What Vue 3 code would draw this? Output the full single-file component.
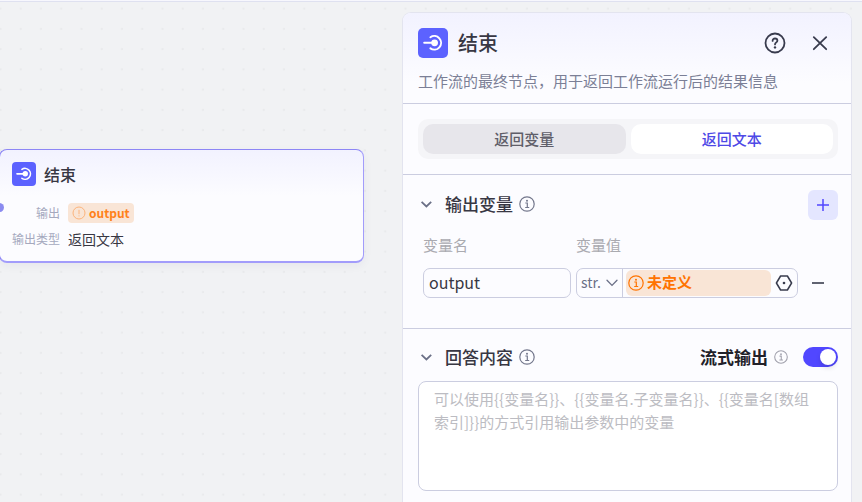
<script setup>
import { ref, computed } from 'vue'

const tabs = ['返回变量', '返回文本']
const active = ref(1)
const name = ref('output')
const type = ref('str.')
const streaming = ref(true)
const answer = ref('')
const outputType = computed(() => tabs[active.value])
const hint = '可以使用{{变量名}}、{{变量名.子变量名}}、{{变量名[数组索引]}}的方式引用输出参数中的变量'
</script>

<template>
  <main class="page">
    <svg class="dots" aria-hidden="true">
      <defs>
        <pattern id="dot-grid" x="-10" y="-4" width="20.25" height="20.25" patternUnits="userSpaceOnUse">
          <circle cx="10.5" cy="10.5" r="1.2" fill="#e9eaec" />
        </pattern>
      </defs>
      <rect width="100%" height="100%" fill="url(#dot-grid)" />
    </svg>

    <div class="stage">
      <article class="node">
        <span class="port"></span>
        <header class="node-head">
          <span class="logo small">
            <svg viewBox="0 0 30 30" aria-hidden="true">
              <path d="M12.4 9.2A6.8 6.8 0 1 1 12.4 20.4" fill="none" stroke="#fff" stroke-width="2" stroke-linecap="round" />
              <path d="M6.2 14.8H15" stroke="#fff" stroke-width="2" stroke-linecap="round" />
              <circle cx="16.6" cy="14.8" r="3.4" fill="#fff" />
            </svg>
          </span>
          <h2>结束</h2>
        </header>
        <dl>
          <dt>输出</dt>
          <dd>
            <span class="chip">
              <svg viewBox="0 0 14 14" aria-hidden="true">
                <circle cx="7" cy="7" r="6" fill="none" stroke="#fcb47c" />
                <path d="M7 3.8V8.2M7 9.4V10.4" stroke="#fcb47c" />
              </svg>
              output
            </span>
          </dd>
          <dt>输出类型</dt>
          <dd>{{ outputType }}</dd>
        </dl>
      </article>
    </div>

    <section class="panel">
      <header class="panel-head">
        <div class="title-row">
          <span class="logo">
            <svg viewBox="0 0 30 30" aria-hidden="true">
              <path d="M12.4 9.2A6.8 6.8 0 1 1 12.4 20.4" fill="none" stroke="#fff" stroke-width="2" stroke-linecap="round" />
              <path d="M6.2 14.8H15" stroke="#fff" stroke-width="2" stroke-linecap="round" />
              <circle cx="16.6" cy="14.8" r="3.4" fill="#fff" />
            </svg>
          </span>
          <h1>结束</h1>
          <button class="icon-btn" type="button" aria-label="帮助">
            <svg width="22" height="22" viewBox="0 0 22 22" fill="none" stroke="#383b4d" stroke-width="1.8" stroke-linecap="round">
              <circle cx="11" cy="11" r="9.5" />
              <path d="M8.6 8.9C8.6 7.4 9.6 6.5 11 6.5S13.4 7.4 13.4 8.7C13.4 10.3 11 10.5 11 12.4" />
              <circle cx="11" cy="15.4" r="1.2" fill="#383b4d" stroke="none" />
            </svg>
          </button>
          <button class="icon-btn" type="button" aria-label="关闭">
            <svg width="22" height="22" viewBox="0 0 22 22" fill="none" stroke="#383b4d" stroke-width="1.8" stroke-linecap="round">
              <path d="M4.8 5.1L17.2 17.2M17.2 5.1L4.8 17.2" />
            </svg>
          </button>
        </div>
        <p>工作流的最终节点，用于返回工作流运行后的结果信息</p>
      </header>

      <div class="tabs-wrap">
        <div class="tabs">
          <button
            v-for="(tab, i) in tabs"
            :key="tab"
            type="button"
            :class="{ on: i === active }"
            :aria-pressed="i === active"
            @click="active = i"
          >{{ tab }}</button>
        </div>
      </div>

      <div class="block variables">
        <div class="block-head">
          <svg class="chevron" viewBox="0 0 16 16"><path d="M3.6 5.8L8.4 10.4L13.2 5.8" /></svg>
          <h3>输出变量</h3>
          <svg class="info" viewBox="0 0 16 16"><circle cx="8" cy="8" r="7.2" /><path d="M6.3 7H8.3V11.4M6.2 11.5H10.2" /><circle class="pt" cx="8" cy="4.8" r="1" /></svg>
          <button class="add" type="button" aria-label="添加变量">
            <svg width="14" height="14" viewBox="0 0 14 14"><path d="M7 1V13M1 7H13" stroke="#5147ff" stroke-width="1.5" /></svg>
          </button>
        </div>
        <div class="fields">
          <label class="field-label" for="var-name">变量名</label>
          <label class="field-label value-label" for="var-type">变量值</label>
          <input id="var-name" v-model="name" type="text" />
          <div class="value-box">
            <span class="select-wrap">
              <select id="var-type" v-model="type">
                <option>str.</option>
                <option>int.</option>
              </select>
              <svg width="12" height="8" viewBox="0 0 12 8"><path d="M1 1.2L6 6.4L11 1.2" fill="none" stroke="#6b7087" stroke-width="1.3" stroke-linecap="round" /></svg>
            </span>
            <span class="undefined">
              <svg class="info" viewBox="0 0 16 16"><circle cx="8" cy="8" r="7.2" /><path d="M6.3 7H8.3V11.4M6.2 11.5H10.2" /><circle class="pt" cx="8" cy="4.8" r="1" /></svg>
              <span>未定义</span>
            </span>
            <button class="ref-btn" type="button" aria-label="选择引用">
              <svg width="18" height="18" viewBox="0 0 18 18"><path d="M5.6 2H12.4L16.6 9L12.4 16H5.6L1.4 9Z" fill="none" stroke="#383b4d" stroke-width="1.5" stroke-linejoin="round" /><circle cx="9" cy="9" r="1.3" fill="#383b4d" /></svg>
            </button>
          </div>
          <button class="remove" type="button" aria-label="删除变量">
            <svg width="14" height="14" viewBox="0 0 14 14"><path d="M1 7H13" stroke="#383b4d" stroke-width="1.6" /></svg>
          </button>
        </div>
      </div>

      <div class="block answer">
        <div class="block-head">
          <svg class="chevron" viewBox="0 0 16 16"><path d="M3.6 5.8L8.4 10.4L13.2 5.8" /></svg>
          <h3><label for="answer">回答内容</label></h3>
          <svg class="info" viewBox="0 0 16 16"><circle cx="8" cy="8" r="7.2" /><path d="M6.3 7H8.3V11.4M6.2 11.5H10.2" /><circle class="pt" cx="8" cy="4.8" r="1" /></svg>
          <label class="stream" for="stream">流式输出</label>
          <svg class="info light" viewBox="0 0 16 16"><circle cx="8" cy="8" r="7.2" /><path d="M6.3 7H8.3V11.4M6.2 11.5H10.2" /><circle class="pt" cx="8" cy="4.8" r="1" /></svg>
          <input id="stream" v-model="streaming" class="switch" type="checkbox" role="switch" />
        </div>
        <textarea id="answer" v-model="answer" :placeholder="hint"></textarea>
      </div>
    </section>
  </main>
</template>

<style>
body {
  background: #f1f2f4;
}
</style>

<style scoped>
.page {
  position: relative;
  display: flex;
  box-sizing: border-box;
  height: 100vh;
  min-height: 502px;
  overflow: hidden;
  padding: 11px 10px 0 0;
  background: #f1f2f4;
  border-top: 1px solid #f7f7fd;
  box-shadow: inset 0 1px #dfe1f0;
  font-family: "Noto Sans CJK SC", "Noto Sans", sans-serif;
  color: #383743;
}
.page,
.page * {
  box-sizing: border-box;
}
.dots {
  position: absolute;
  inset: 1px 0 0;
  width: 100%;
  height: 100%;
}
h1, h2, h3, p, dl, dd {
  margin: 0;
}
button, input, select, textarea {
  font: inherit;
  color: inherit;
}
button {
  display: flex;
  align-items: center;
  justify-content: center;
  padding: 0;
  border: 0;
  background: none;
  cursor: pointer;
}
svg {
  display: block;
  flex: none;
}

.stage {
  position: relative;
  flex: 0 0 402px;
}
.node {
  position: absolute;
  left: -1px;
  top: 137px;
  width: 365px;
  height: 114px;
  padding: 12px;
  border: 1px solid #8d86f5;
  border-right-color: #a29cfb;
  border-bottom: 2px solid #a29cfb;
  border-radius: 8px;
  background: linear-gradient(#f2f2ff, #fcfcff 46px);
  box-shadow: 0 3px 10px rgba(40, 40, 90, 0.05);
}
.port {
  position: absolute;
  left: -5px;
  top: 53px;
  width: 9px;
  height: 9px;
  border-radius: 50%;
  background: #8b8bf0;
}
.node-head {
  display: flex;
  align-items: center;
  gap: 8px;
}
.node-head h2 {
  font-size: 16px;
  line-height: 24px;
  font-weight: 500;
}
.logo {
  flex: none;
  width: 30px;
  height: 30px;
  border-radius: 5px;
  background: #5c62ff;
}
.logo.small {
  width: 24px;
  height: 24px;
  border-radius: 4px;
}
dl {
  display: grid;
  grid-template-columns: 48px 1fr;
  column-gap: 8px;
  row-gap: 6px;
  margin-top: 17px;
  align-items: center;
  font-size: 14px;
  line-height: 20px;
}
dt {
  font-size: 12px;
  text-align: right;
  white-space: nowrap;
  color: #a5a9be;
}
.chip {
  display: inline-flex;
  align-items: center;
  gap: 3px;
  height: 20px;
  padding: 0 4px;
  border-radius: 4px;
  background: #f9e5d6;
  color: #ff811a;
  font-size: 12px;
  font-weight: 700;
  vertical-align: top;
}
.chip svg {
  width: 14px;
  height: 14px;
}

.panel {
  position: relative;
  flex: 1;
  min-width: 0;
  border: 1px solid #e3e4ef;
  border-bottom: 0;
  border-radius: 9px 9px 0 0;
  background: #fcfcff;
}
.panel-head {
  padding: 15px 13px 11px 15px;
  border-bottom: 1px solid #cbcde0;
  border-radius: 8px 8px 0 0;
  background: linear-gradient(#f2f2ff, #fcfcff 70px);
}
.title-row {
  display: flex;
  align-items: center;
}
.title-row h1 {
  flex: 1;
  margin-left: 10px;
  font-size: 20px;
  line-height: 30px;
  font-weight: 500;
}
.icon-btn {
  width: 36px;
  height: 30px;
}
.icon-btn + .icon-btn {
  margin-left: 9px;
}
.panel-head p {
  margin-top: 12px;
  font-size: 15px;
  line-height: 22px;
  white-space: nowrap;
  color: #7b7f96;
}
.tabs-wrap {
  padding: 15px 13px 15px 15px;
  border-bottom: 1px solid #cbcde0;
}
.tabs {
  display: grid;
  grid-template-columns: 1fr 1fr;
  gap: 5px;
  padding: 5px;
  border-radius: 10px;
  background: #f5f5f8;
}
.tabs button {
  height: 30px;
  padding-bottom: 2px;
  border-radius: 10px;
  background: #e7e6eb;
  color: #5f5e69;
  font-size: 15px;
  font-weight: 500;
}
.tabs button.on {
  background: #fff;
  color: #4e49e6;
}

.block {
  padding: 15px 13px 15px 15px;
}
.variables {
  padding-bottom: 30px;
  border-bottom: 1px solid #cbcde0;
}
.block-head {
  display: flex;
  align-items: center;
  height: 30px;
  padding-bottom: 2px;
}
.chevron {
  width: 16px;
  height: 16px;
  fill: none;
  stroke: #6b7087;
  stroke-width: 1.8;
}
.block-head h3 {
  margin: 0 6px 0 11px;
  font-size: 17px;
  line-height: 28px;
  font-weight: 500;
}
.info {
  width: 16px;
  height: 16px;
  fill: none;
  stroke: #73778c;
  stroke-width: 1.2;
}
.info .pt {
  fill: #73778c;
  stroke: none;
}
.info.light {
  width: 14px;
  height: 14px;
  stroke: #a0a0ac;
}
.info.light .pt {
  fill: #a0a0ac;
}
.add {
  align-self: flex-start;
  width: 30px;
  height: 30px;
  margin-left: auto;
  border-radius: 6px;
  background: #e4e6ff;
}
.fields {
  display: grid;
  grid-template-columns: 148px minmax(0, 1fr) 35px;
  column-gap: 5px;
  row-gap: 12px;
  padding: 14px 0 0 5px;
}
.field-label {
  font-size: 15px;
  line-height: 22px;
  color: #aaaab0;
}
.value-label {
  grid-column: 2 / 4;
}
.fields input {
  min-width: 0;
  height: 30px;
  padding: 0 5px 2px;
  border: 1px solid #cbcde0;
  border-radius: 7px;
  background: transparent;
  font-size: 16px;
}
.value-box {
  display: flex;
  align-items: center;
  height: 30px;
  border: 1px solid #cbcde0;
  border-radius: 7px;
}
.select-wrap {
  display: grid;
  flex: 0 0 46px;
  height: 28px;
  align-items: center;
  border-right: 1px solid #cbcde0;
}
.select-wrap > * {
  grid-area: 1 / 1;
}
.select-wrap select {
  width: 100%;
  height: 28px;
  padding: 0 0 2px 4px;
  border: 0;
  appearance: none;
  background: none;
  color: #6b7087;
  font-size: 14px;
}
.select-wrap svg {
  justify-self: end;
  margin-right: 4px;
  pointer-events: none;
}
.undefined {
  display: flex;
  flex: 1;
  align-items: center;
  gap: 3px;
  height: 26px;
  margin-left: 3px;
  padding: 0 2px;
  border-radius: 6px;
  background: #f9e5d6;
  color: #ff7300;
  font-size: 15px;
  line-height: 22px;
  font-weight: 700;
}
.undefined > span {
  padding-bottom: 2px;
}
.undefined .info {
  stroke: #ff7300;
}
.undefined .info .pt {
  fill: #ff7300;
}
.ref-btn {
  width: 26px;
  height: 28px;
}
.remove {
  width: 30px;
  height: 30px;
}

.answer {
  padding-top: 14px;
}
.stream {
  margin: 0 6px 0 auto;
  font-size: 17px;
  line-height: 28px;
  font-weight: 700;
  color: #222129;
}
.switch {
  flex: none;
  width: 35px;
  height: 20px;
  margin: 0 0 0 15px;
  padding: 2px;
  appearance: none;
  border-radius: 10px;
  background: #c6c7d2;
  cursor: pointer;
}
.switch::before {
  content: "";
  display: block;
  width: 16px;
  height: 16px;
  border-radius: 50%;
  background: #fff;
  box-shadow: 0 3px 5px rgba(0, 0, 0, 0.12);
}
.switch:checked {
  background: #5147ff;
}
.switch:checked::before {
  margin-left: auto;
}
textarea {
  display: block;
  width: 100%;
  height: 110px;
  margin-top: 8px;
  padding: 5px 15px;
  border: 1px solid #cbcde0;
  border-radius: 8px;
  resize: none;
  background: #fff;
  font-size: 15px;
  line-height: 23px;
}
textarea::placeholder {
  color: #bcbcc2;
  opacity: 1;
}
</style>
